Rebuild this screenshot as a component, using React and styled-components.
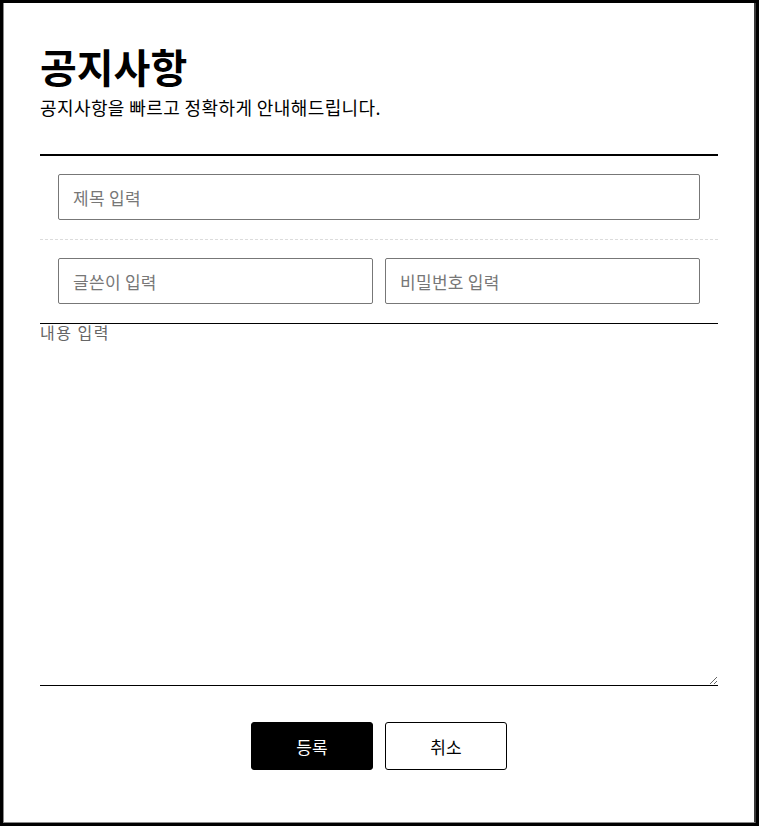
import React from "react";
import styled, { createGlobalStyle } from "styled-components";

const GlobalStyle = createGlobalStyle`
  html, body {
    margin: 0;
    padding: 0;
    background-color: #000;
  }
  body {
    font-family: "Noto Sans CJK KR", "Noto Sans", sans-serif;
    color: #000;
  }
  * {
    box-sizing: border-box;
  }
`;

const Frame = styled.div`
  margin: 3px 0 0 3px;
  width: 753px;
  height: 820px;
  background-color: #fff;
  border-left: 1px solid #8a8a8a;
  border-bottom: 1px solid #8a8a8a;
  border-right: 2px solid #3a3a3a;
  padding: 0 36px;
`;

const Header = styled.header`
  padding-top: 39px;
  padding-bottom: 34px;
`;

const Title = styled.h1`
  margin: 0;
  font-size: 40px;
  font-weight: 700;
  line-height: 48px;
  letter-spacing: 0;
`;

const SubTitle = styled.p`
  margin: 4px 0 0;
  font-size: 18px;
  line-height: 26px;
  letter-spacing: 0.4px;
`;

const Form = styled.form`
  border-top: 2px solid #000;
`;

const Row = styled.div`
  display: flex;
  gap: 12px;
  padding: 18px 18px 19px;
  border-bottom: ${(props) => (props.$dashed ? "1px dashed #dcdcdc" : "none")};
`;

const Input = styled.input`
  flex: 1;
  min-width: 0;
  height: 46px;
  padding: 0 14px;
  border: 1px solid #777;
  border-radius: 2px;
  font-family: "Noto Sans CJK KR", "Noto Sans", sans-serif;
  font-size: 17px;
  letter-spacing: 0.3px;
  color: #000;
  outline: none;

  &::placeholder {
    color: #777;
  }
`;

const Content = styled.textarea`
  display: block;
  width: 100%;
  height: 363px;
  margin: 0;
  padding: 0;
  border: none;
  border-top: 1px solid #000;
  border-bottom: 1px solid #000;
  border-radius: 0;
  font-family: "Noto Sans CJK KR", "Noto Sans", sans-serif;
  font-size: 16px;
  letter-spacing: 1.5px;
  line-height: 1.1;
  outline: none;

  &::placeholder {
    color: #666;
  }
`;

const ButtonGroup = styled.div`
  display: flex;
  justify-content: center;
  gap: 12px;
  margin-top: 36px;
`;

const Button = styled.button`
  width: 122px;
  height: 48px;
  border: 1px solid #000;
  border-radius: 3px;
  background-color: ${(props) => (props.$primary ? "#000" : "#fff")};
  color: ${(props) => (props.$primary ? "#fff" : "#000")};
  font-family: "Noto Sans CJK KR", "Noto Sans", sans-serif;
  font-size: 17px;
  cursor: pointer;
`;

function App() {
  return (
    <>
      <GlobalStyle />
      <Frame>
        <Header>
          <Title>공지사항</Title>
          <SubTitle>공지사항을 빠르고 정확하게 안내해드립니다.</SubTitle>
        </Header>
        <Form onSubmit={(e) => e.preventDefault()}>
          <Row $dashed>
            <Input type="text" placeholder="제목 입력" />
          </Row>
          <Row>
            <Input type="text" placeholder="글쓴이 입력" />
            <Input type="password" placeholder="비밀번호 입력" />
          </Row>
          <Content placeholder="내용 입력" />
          <ButtonGroup>
            <Button type="submit" $primary>
              등록
            </Button>
            <Button type="button">취소</Button>
          </ButtonGroup>
        </Form>
      </Frame>
    </>
  );
}

export default App;
